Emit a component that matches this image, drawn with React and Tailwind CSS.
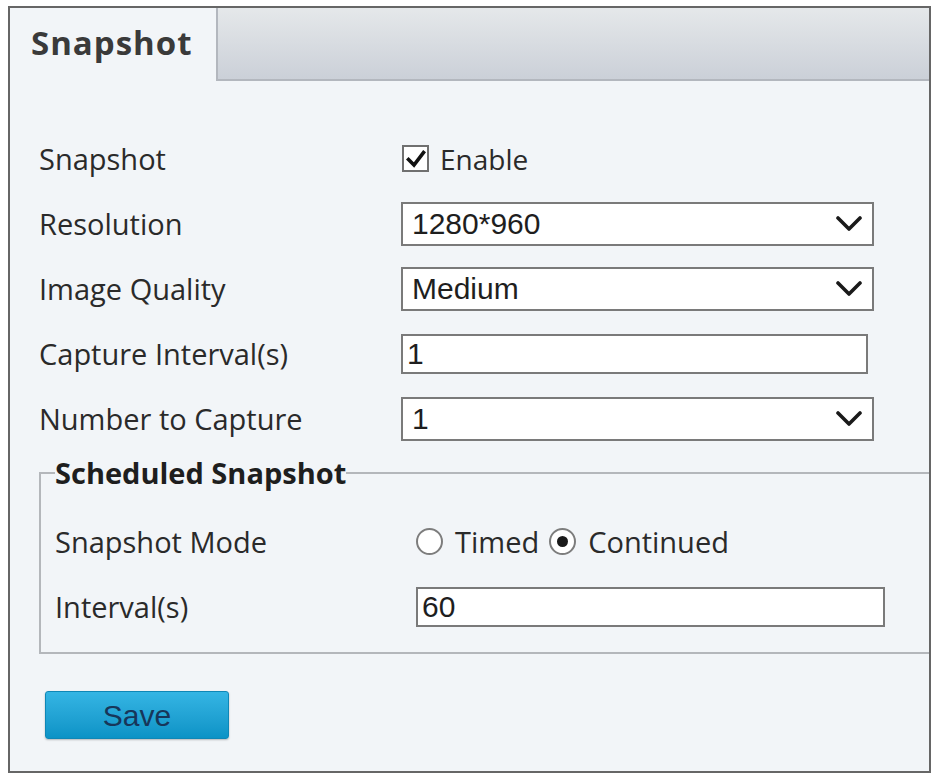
import React from 'react';

const labelCls = "w-[362px] shrink-0 text-[29px] text-[#2a2a2a] font-['Open_Sans',sans-serif]";
const fieldText = "text-[30px] text-[#1e1e1e] font-['Liberation_Sans',Arial,sans-serif] leading-none";

function Chevron() {
  return (
    <svg width="26" height="16" viewBox="0 0 26 16" className="shrink-0">
      <path d="M2 2 L13 13 L24 2" fill="none" stroke="#1a1a1a" strokeWidth="3.6" strokeLinecap="round" strokeLinejoin="round" />
    </svg>
  );
}

function SelectBox({ value }) {
  return (
    <div className="w-[473px] h-[44px] flex items-center justify-between bg-white border-2 border-[#7a7a7a] pl-[9px] pr-[10px]">
      <span className={fieldText}>{value}</span>
      <Chevron />
    </div>
  );
}

function TextBox({ value, width = 'w-[467px]' }) {
  return (
    <div className={`${width} h-[40px] flex items-center bg-white border-2 border-[#7a7a7a] pl-[4px]`}>
      <span className={fieldText}>{value}</span>
    </div>
  );
}

function Row({ label, children }) {
  return (
    <div className="h-[65px] flex items-center">
      <div className={labelCls}>{label}</div>
      {children}
    </div>
  );
}

function Radio({ checked, label }) {
  return (
    <div className="flex items-center">
      <div className="w-[27px] h-[27px] rounded-full border-2 border-[#7d7d7d] bg-white flex items-center justify-center">
        {checked && <div className="w-[11px] h-[11px] rounded-full bg-[#1a1a1a]" />}
      </div>
      <span className="ml-[12px] text-[29px] text-[#2a2a2a] font-['Open_Sans',sans-serif]">{label}</span>
    </div>
  );
}

export default function App() {
  return (
    <div className="min-h-screen bg-white pl-[8px] pt-[6px]">
      <div className="w-[923px] h-[767px] border-2 border-[#666] bg-[#f2f5f8] flex flex-col">
        {/* tab strip */}
        <div className="flex h-[73px] shrink-0">
          <div className="w-[206px] flex items-center pl-[21px] pb-[4px] text-[33px] font-bold tracking-[1px] text-[#3a3a3a] font-['Open_Sans',sans-serif]">
            Snapshot
          </div>
          <div className="flex-1 bg-gradient-to-b from-[#e5e8ea] to-[#cbd0d8] border-l-2 border-b-2 border-[#b3b7be]" />
        </div>

        <div className="pl-[29px] pt-[45px]">
          <Row label="Snapshot">
            <div className="flex items-center ml-[1px]">
              <div className="w-[27px] h-[27px] border-2 border-[#707070] bg-white flex items-center justify-center">
                <svg width="20" height="18" viewBox="0 0 20 18">
                  <path d="M2.5 9.5 L8 15 L17.5 2.5" fill="none" stroke="#111" strokeWidth="3.6" strokeLinecap="square" />
                </svg>
              </div>
              <span className="ml-[11px] text-[28px] text-[#2a2a2a] font-['Open_Sans',sans-serif]">Enable</span>
            </div>
          </Row>
          <Row label="Resolution">
            <SelectBox value="1280*960" />
          </Row>
          <Row label="Image Quality">
            <SelectBox value="Medium" />
          </Row>
          <Row label="Capture Interval(s)">
            <TextBox value="1" />
          </Row>
          <Row label="Number to Capture">
            <SelectBox value="1" />
          </Row>

          <fieldset className="mt-[4px] border-2 border-r-0 border-[#b4b7bb] pl-[14px] pb-[13px]">
            <legend className="text-[29px] leading-[36px] font-bold text-[#1e1e1e] font-['Open_Sans',sans-serif]">
              Scheduled Snapshot
            </legend>
            <div className="pt-[18px]">
              <div className="h-[65px] flex items-center">
                <div className="w-[361px] shrink-0 text-[29px] text-[#2a2a2a] font-['Open_Sans',sans-serif]">Snapshot Mode</div>
                <div className="flex items-center gap-[10px]">
                  <Radio label="Timed" />
                  <Radio checked label="Continued" />
                </div>
              </div>
              <div className="h-[65px] flex items-center">
                <div className="w-[361px] shrink-0 text-[29px] text-[#2a2a2a] font-['Open_Sans',sans-serif]">Interval(s)</div>
                <TextBox value="60" width="w-[469px]" />
              </div>
            </div>
          </fieldset>

          <button className="mt-[37px] ml-[6px] w-[184px] h-[48px] rounded-[3px] border border-[#0f87b6] bg-gradient-to-b from-[#34b5e4] to-[#0a93c6] text-[30px] text-[#17365a] font-['Liberation_Sans',Arial,sans-serif] shadow-[0_1px_2px_rgba(0,0,0,0.25)]">
            Save
          </button>
        </div>
      </div>
    </div>
  );
}
